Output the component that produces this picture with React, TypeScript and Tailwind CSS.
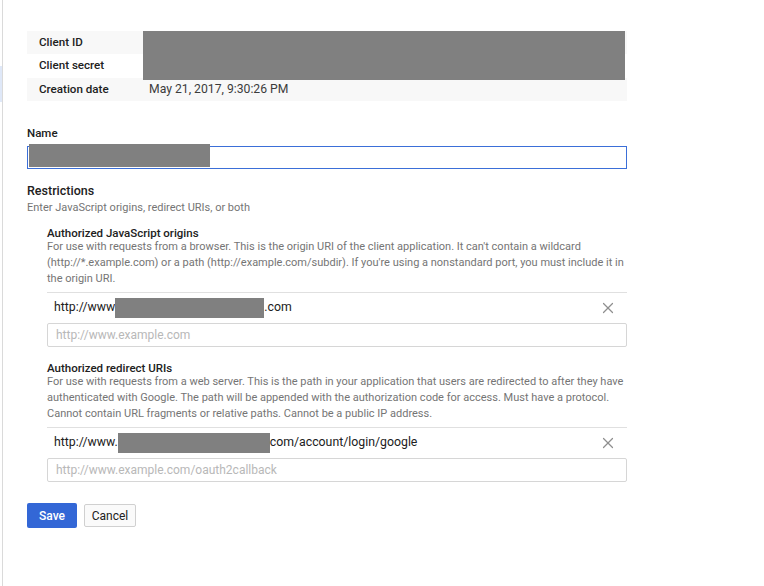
import { X } from "lucide-react"

function Redacted({ className }: { className: string }) {
  return <div className={`absolute bg-[#808080] ${className}`} />
}

function UrlSection({
  title,
  lines,
  prefix,
  suffix,
  boxWidth,
  placeholder,
  top,
}: {
  title: string
  lines: string[]
  prefix: string
  suffix: string
  boxWidth: string
  placeholder: string
  top: string
}) {
  return (
    <div className={`ml-5 ${top}`}>
      <div className="h-[14px] text-[11.5px] leading-[16px] font-medium text-[#212121]">{title}</div>
      <div className="text-[11px] leading-[16px] text-[#757575]">
        {lines.map((l) => (
          <div key={l}>{l}</div>
        ))}
      </div>
      <div className="mt-[5px] border-t border-[#e0e0e0] h-[30px] flex items-center pl-[7px] pr-[14px] text-[12.3px] text-[#212121]">
        <span>{prefix}</span>
        <span className={`bg-[#808080] h-[20px] ${boxWidth}`} />
        <span>{suffix}</span>
        <X className="ml-auto -mr-[4px] w-[18px] h-[18px] text-[#8f8f8f]" strokeWidth={1.6} />
      </div>
      <div className="mt-px h-[24px] border border-[#d6d6d6] rounded-[2px] flex items-center pl-2 text-[12px] text-[#b8b8b8]">
        {placeholder}
      </div>
    </div>
  )
}

export default function App() {
  return (
    <div className="flex min-h-[586px] bg-white font-['Roboto',sans-serif]">
      <div className="w-[2px] shrink-0 pt-[66px]">
        <div className="h-[36px] bg-[#dfe8f8]" />
      </div>
      <div className="w-px shrink-0 bg-[#dadada]" />
      <div className="pl-6 pt-[31px] w-[624px]">
        <div className="relative w-[600px] text-[11.6px] text-[#212121]">
          <div className="flex h-[23px] items-center bg-[#f8f8f8]">
            <div className="w-[116px] pl-3 font-medium">Client ID</div>
          </div>
          <div className="flex h-[24px] items-center">
            <div className="w-[116px] pl-3 font-medium">Client secret</div>
          </div>
          <div className="flex h-[23px] items-center bg-[#f8f8f8]">
            <div className="w-[116px] pl-3 font-medium">Creation date</div>
            <div className="pl-[6px] text-[12.2px] text-[#3c3c3c]">May 21, 2017, 9:30:26 PM</div>
          </div>
          <Redacted className="left-[116px] top-0 w-[482px] h-[49px]" />
        </div>

        <div className="mt-[24px] text-[11.5px] leading-[16px] font-medium text-[#212121]">Name</div>
        <div className="relative mt-[5px] w-[600px] h-[23px] border border-[#3b6fd8]">
          <Redacted className="left-px -top-[3px] w-[181px] h-[23px]" />
        </div>

        <div className="mt-[13px] text-[12.5px] leading-[18px] font-medium text-[#212121]">Restrictions</div>
        <div className="text-[11px] leading-[16px] text-[#757575]">
          Enter JavaScript origins, redirect URIs, or both
        </div>

        <div className="w-[600px]">
          <UrlSection
            top="mt-[9px]"
            title="Authorized JavaScript origins"
            lines={[
              "For use with requests from a browser. This is the origin URI of the client application. It can't contain a wildcard",
              "(http://*.example.com) or a path (http://example.com/subdir). If you're using a nonstandard port, you must include it in",
              "the origin URI.",
            ]}
            prefix="http://www"
            suffix=".com"
            boxWidth="w-[149px]"
            placeholder="http://www.example.com"
          />
          <UrlSection
            top="mt-[13px]"
            title="Authorized redirect URIs"
            lines={[
              "For use with requests from a web server. This is the path in your application that users are redirected to after they have",
              "authenticated with Google. The path will be appended with the authorization code for access. Must have a protocol.",
              "Cannot contain URL fragments or relative paths. Cannot be a public IP address.",
            ]}
            prefix="http://www."
            suffix="com/account/login/google"
            boxWidth="w-[152px]"
            placeholder="http://www.example.com/oauth2callback"
          />
        </div>

        <div className="mt-[21px] flex items-center gap-[7px]">
          <button className="h-[25px] w-[50px] rounded-[2px] bg-[#3367d6] text-white text-[12px] font-medium">
            Save
          </button>
          <button className="h-[23px] w-[52px] rounded-[2px] border border-[#d0d0d0] bg-[#fafafa] text-[12px] text-[#212121]">
            Cancel
          </button>
        </div>
      </div>
    </div>
  )
}
